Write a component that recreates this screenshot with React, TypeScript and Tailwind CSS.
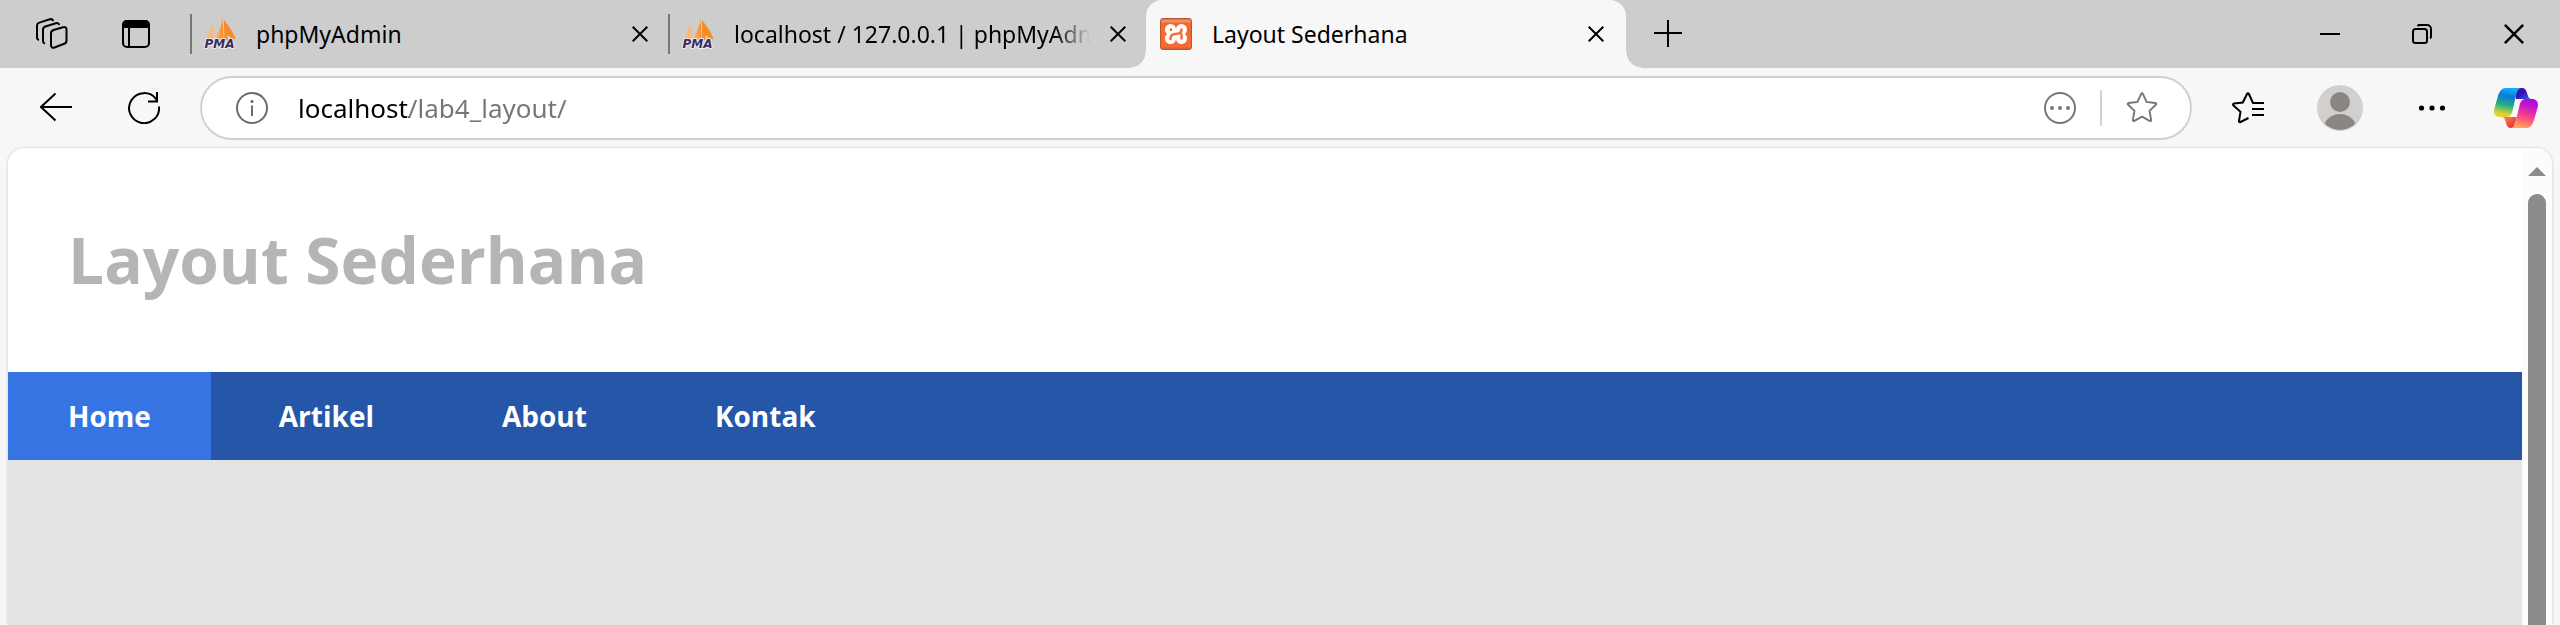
import React from "react";

type IconProps = { className?: string };

function WorkspacesIcon() {
  return (
    <svg className="h-9 w-9" viewBox="0 0 36 36" fill="none" stroke="#000" strokeWidth="2" strokeLinecap="round" strokeLinejoin="round">
      <path d="M19.500 14 29 11.200c2-.6 3.500.4 3.500 2.200v11.300c0 1.600-.8 2.600-2.300 3.100L20.500 31.500c-2 .6-3.500-.4-3.500-2.200V17.300c0-1.600.8-2.700 2.500-3.300Z" />
      <path d="M25 8.200c-.6-1-1.800-1.400-3.200-1L11.300 10.500C9.800 11 9 12 9 13.600V25c0 1 .4 1.800 1.200 2.200" />
      <path d="M19 4.300c-.6-1-1.800-1.400-3.200-1L5.300 6.600C3.800 7.100 3 8.100 3 9.700V21.500c0 1 .4 1.800 1.200 2.200" />
    </svg>
  );
}

function TabActionsIcon() {
  return (
    <svg className="h-7 w-7" viewBox="0 0 28 28" fill="none" stroke="#000" strokeWidth="2">
      <rect x="1" y="1" width="26" height="26" rx="4" />
      <path d="M0 8V5a5 5 0 0 1 5-5h18a5 5 0 0 1 5 5v3Z" fill="#000" stroke="none" />
      <path d="M7 8v19" />
    </svg>
  );
}

function PmaIcon() {
  return (
    <svg className="h-8 w-8 shrink-0 overflow-visible" viewBox="0 0 32 32">
      <defs>
        <linearGradient id="sail" x1="0" y1="0" x2="1" y2="0">
          <stop offset="0" stopColor="#fbc38a" />
          <stop offset="1" stopColor="#f98b25" />
        </linearGradient>
      </defs>
      <path d="M8 4.500C7 10 4.500 16 2 21.500h7.500C9.800 16 9 10 8 4.500Z" fill="#fbb878" />
      <path d="M18.500.5C17.500 9 13.500 16 10 22h9.500Z" fill="url(#sail)" />
      <path d="M20 2 20.300 22H24l-1-4.500 2.800 1 1.700 3 4-.5C29.500 14.500 24.500 8 20 2Z" fill="#f98b25" />
      <text x="0.500" y="30" fontSize="12" fontWeight="700" fontStyle="italic" fontFamily="DejaVu Sans" fill="#3a2c63" stroke="#f3e9e6" strokeWidth="2" strokeLinejoin="round" paintOrder="stroke">PMA</text>
    </svg>
  );
}

function XamppIcon() {
  return (
    <svg className="h-8 w-8 shrink-0" viewBox="0 0 32 32">
      <defs>
        <linearGradient id="xampp" x1="0" y1="0" x2="0" y2="1">
          <stop offset="0" stopColor="#c9643a" />
          <stop offset="0.080" stopColor="#f29a70" />
          <stop offset="0.160" stopColor="#ee6a32" />
          <stop offset="0.900" stopColor="#f76c30" />
          <stop offset="1" stopColor="#c95f2f" />
        </linearGradient>
      </defs>
      <rect x="0.500" y="0.500" width="31" height="31" rx="2.500" fill="url(#xampp)" stroke="#b9592b" />
      <g fill="#fff">
        <circle cx="10.500" cy="11.500" r="5.500" />
        <circle cx="21.500" cy="11.500" r="5.500" />
        <circle cx="10.500" cy="20.500" r="5.500" />
        <circle cx="21.500" cy="20.500" r="5.500" />
        <path d="M9 12h14v8H9Z" />
      </g>
      <g fill="none" stroke="#f4692f" strokeWidth="2.400" strokeLinecap="round">
        <path d="M11 11.500v.5M10.500 21c0-3 1-4.500 3.500-4.800l4-.6c2.500-.4 3.500-1.600 3.500-4.100M21.500 20.500v-4" />
      </g>
    </svg>
  );
}

function CloseIcon({ className = "h-4 w-4" }: IconProps) {
  return (
    <svg className={className} viewBox="0 0 16 16" fill="none" stroke="#000" strokeWidth="2">
      <path d="m.7.7 14.600 14.600M15.300.7.7 15.300" />
    </svg>
  );
}

function CopilotIcon() {
  return (
    <svg className="h-10 w-11" viewBox="0 0 44 40">
      <defs>
        <linearGradient id="cpA" x1="0.600" y1="0" x2="0.400" y2="1">
          <stop offset="0" stopColor="#12b2f5" />
          <stop offset="0.300" stopColor="#0a78dc" />
          <stop offset="0.600" stopColor="#25ad80" />
          <stop offset="0.900" stopColor="#d3d43a" />
          <stop offset="1" stopColor="#f3c928" />
        </linearGradient>
        <linearGradient id="cpB" x1="0.700" y1="0" x2="0.400" y2="1">
          <stop offset="0" stopColor="#ae05e8" />
          <stop offset="0.250" stopColor="#c816c8" />
          <stop offset="0.600" stopColor="#fb4388" />
          <stop offset="1" stopColor="#ffa957" />
        </linearGradient>
        <linearGradient id="cpC" x1="0" y1="0" x2="1" y2="1">
          <stop offset="0" stopColor="#2a10a8" />
          <stop offset="0.500" stopColor="#3a12bd" />
          <stop offset="1" stopColor="#2a72e4" />
        </linearGradient>
        <linearGradient id="cpD" x1="0" y1="0" x2="1" y2="1">
          <stop offset="0" stopColor="#ff8a45" />
          <stop offset="1" stopColor="#e0203c" />
        </linearGradient>
      </defs>
      <path d="M20 0h8c3 0 4.200 2 5 5l1 3c.7 2 1.500 3 4 3H22Z" fill="url(#cpC)" />
      <path d="M9 29h14l-3 9c-.6 1.400-1.500 2-3 2-3 0-4.200-2-5-5l-1-3c-.5-1.800-1-2.600-3-3Z" fill="url(#cpD)" />
      <path d="M12 0h16c-3 0-4.500 2-5.400 5l-4.200 18c-1.200 4-2.700 6-6.400 6H6c-5 0-7-4-5.500-9L4 8c1.600-5 3.500-8 8-8Z" fill="url(#cpA)" />
      <path d="M32 40H16c3 0 4.500-2 5.400-5l4.200-18c1.200-4 2.700-6 6.400-6h6c5 0 7 4 5.500 9L40 32c-1.600 5-3.500 8-8 8Z" fill="url(#cpB)" />
    </svg>
  );
}

const STAR =
  "M16 2.200c.5-1.100 1.500-1.100 2 0l3.900 8.300 9.200 1.200c1.200.2 1.500 1.100.6 1.900l-6.700 6.300 1.700 9.700c.2 1.200-.5 1.700-1.600 1.100L17 26.200l-8.100 4.500c-1 .6-1.800.1-1.600-1.100l1.700-9.700-6.700-6.300c-.9-.8-.6-1.700.6-1.900l9.200-1.200Z";

type TabProps = { title: string; icon: React.ReactNode; className: string; faded?: boolean };

function Tab({ title, icon, className, faded = false }: TabProps) {
  return (
    <div className={"flex items-center " + className}>
      {icon}
      <span
        className={
          "ml-5 min-w-0 flex-1 overflow-hidden whitespace-nowrap text-[23px] leading-8 " +
          (faded ? "[mask-image:linear-gradient(to_right,#000_90%,transparent)]" : "")
        }
      >
        {title}
      </span>
      <button type="button" aria-label={"Close " + title} className="ml-5 shrink-0">
        <CloseIcon />
      </button>
    </div>
  );
}

function TabStrip() {
  return (
    <div className="flex h-[68px] items-center bg-[#cdcdcd]">
      <button type="button" aria-label="Workspaces" className="ml-[34px]"><WorkspacesIcon /></button>
      <button type="button" aria-label="Tab actions" className="ml-[52px]"><TabActionsIcon /></button>
      <div className="ml-10 h-10 w-[2px] bg-[#767676]" />
      <Tab title="phpMyAdmin" icon={<PmaIcon />} className="ml-3 w-[444px]" />
      <div className="ml-5 h-10 w-[2px] bg-[#767676]" />
      <Tab title="localhost / 127.0.0.1 | phpMyAdmin" icon={<PmaIcon />} className="ml-3 w-[444px]" faded />
      <div className="ml-1 flex h-full items-end">
        <div className="h-4 w-4 bg-[radial-gradient(circle_at_0_0,#cdcdcd_15px,#f7f7f7_16px)]" />
        <Tab title="Layout Sederhana" icon={<XamppIcon />} className="h-full w-[480px] rounded-t-2xl bg-[#f7f7f7] pl-[14px] pr-[22px]" />
        <div className="h-4 w-4 bg-[radial-gradient(circle_at_100%_0,#cdcdcd_15px,#f7f7f7_16px)]" />
      </div>
      <button type="button" aria-label="New tab" className="ml-3">
        <svg className="h-7 w-7" viewBox="0 0 28 28" stroke="#000" strokeWidth="2"><path d="M0 13h28M14 0v27" /></svg>
      </button>
      <div className="ml-auto mr-9 flex items-center gap-[72px]">
        <button type="button" aria-label="Minimize">
          <svg className="h-5 w-5" viewBox="0 0 20 20" stroke="#000" strokeWidth="2"><path d="M0 10h20" /></svg>
        </button>
        <button type="button" aria-label="Restore">
          <svg className="h-5 w-5" viewBox="0 0 20 20" fill="none" stroke="#000" strokeWidth="2">
            <rect x="1" y="5" width="14" height="14" rx="2.500" />
            <path d="M5.500 2c.6-.7 1.200-1 2-1H15a4 4 0 0 1 4 4v7.500c0 .8-.3 1.500-1 2" />
          </svg>
        </button>
        <button type="button" aria-label="Close window"><CloseIcon className="h-5 w-5" /></button>
      </div>
    </div>
  );
}

function Toolbar() {
  return (
    <div className="flex h-20 items-center">
      <button type="button" aria-label="Back" className="ml-10">
        <svg className="h-8 w-8" viewBox="0 0 32 32" fill="none" stroke="#000" strokeWidth="2"><path d="M32 15H1M15.500 1.500 1 15l14.500 13.500" /></svg>
      </button>
      <button type="button" aria-label="Refresh" className="ml-14">
        <svg className="h-8 w-8" viewBox="0 0 32 32" fill="none" stroke="#000" strokeWidth="2">
          <path d="M31 14.500A15 15 0 1 1 28 7l1 2.500" /><path d="M29 0v9.500h-9" />
        </svg>
      </button>
      <form className="ml-10 flex h-16 flex-1 items-center rounded-full border-2 border-[#d1d1d1] bg-white pl-[34px] pr-8">
        <svg className="h-8 w-8 shrink-0" viewBox="0 0 32 32" fill="none" stroke="#6b6b6b" strokeWidth="2">
          <circle cx="16" cy="16" r="15" /><path d="M16 13.500V24" /><circle cx="16" cy="9.500" r="1.600" fill="#6b6b6b" stroke="none" />
        </svg>
        <input
          type="text"
          aria-label="Address"
          defaultValue="localhost/lab4_layout/"
          className="ml-[30px] min-w-0 flex-1 bg-[linear-gradient(to_right,#000_111px,#767676_111px)] bg-clip-text text-[26px] leading-9 text-transparent caret-black outline-none"
        />
        <button type="button" aria-label="Site options">
          <svg className="h-8 w-8" viewBox="0 0 32 32" fill="none" stroke="#767676" strokeWidth="2">
            <circle cx="16" cy="16" r="15" />
            <g fill="#767676" stroke="none"><circle cx="8" cy="16" r="2" /><circle cx="16" cy="16" r="2" /><circle cx="24" cy="16" r="2" /></g>
          </svg>
        </button>
        <div className="ml-6 h-9 w-[2px] bg-[#d1d1d1]" />
        <button type="button" aria-label="Add to favorites" className="ml-6">
          <svg className="h-8 w-8" viewBox="0 0 34 34" fill="none" stroke="#767676" strokeWidth="2"><path d={STAR} /></svg>
        </button>
      </form>
      <button type="button" aria-label="Favorites" className="ml-10">
        <svg className="h-8 w-8" viewBox="0 0 32 32" fill="none" stroke="#000" strokeWidth="2">
          <path d="M16.500 26 8.500 30c-1 .5-1.700 0-1.500-1.200l1.500-9L1.500 13.500c-.8-.8-.5-1.700.6-1.900l8.700-1.100 4.200-8.500c.5-1 1.400-1 1.900 0L21 11h11M20 17h12M20 23h12" />
        </svg>
      </button>
      <button type="button" aria-label="Profile" className="ml-[53px]">
        <svg className="h-[46px] w-[46px]" viewBox="0 0 46 46">
          <clipPath id="avatar"><circle cx="23" cy="23" r="22" /></clipPath>
          <circle cx="23" cy="23" r="23" fill="#d2d0ce" />
          <g clipPath="url(#avatar)" fill="#8a8683"><circle cx="23" cy="17" r="10" /><ellipse cx="23" cy="45" rx="17" ry="16" /></g>
        </svg>
      </button>
      <button type="button" aria-label="Settings and more" className="ml-[55px]">
        <svg className="h-6 w-7" viewBox="0 0 28 24"><circle cx="3.500" cy="12" r="2.600" /><circle cx="14" cy="12" r="2.600" /><circle cx="24.500" cy="12" r="2.600" /></svg>
      </button>
      <button type="button" aria-label="Copilot" className="ml-12 mr-[22px]"><CopilotIcon /></button>
    </div>
  );
}

export default function App() {
  const links = ["Home", "Artikel", "About", "Kontak"];
  return (
    <div className="flex h-screen flex-col overflow-hidden bg-[#f7f7f7] font-['Noto_Sans','Open_Sans',sans-serif] text-black">
      <TabStrip />
      <Toolbar />
      <div className="mx-2 flex flex-1 overflow-hidden rounded-t-2xl bg-white shadow-[0_0_2px_1px_#dedede]">
        <main className="flex flex-1 flex-col font-['Open_Sans',sans-serif]">
          <header className="px-[60px] py-[68px]">
            <h1 className="text-[64px] font-bold leading-[88px] text-[#b5b5b5]">Layout Sederhana</h1>
          </header>
          <nav className="flex gap-2 bg-[#2556a7]">
            {links.map((l, i) => (
              <a key={l} href="#" className={"px-[60px] py-6 text-[28px] font-bold leading-10 text-white " + (i === 0 ? "bg-[#3674e4]" : "")}>
                {l}
              </a>
            ))}
          </nav>
          <div className="flex-1 bg-[#e4e4e4]" />
        </main>
        <div className="flex w-[30px] flex-col items-center bg-[#fcfcfc] pt-[19px]">
          <svg className="h-[9px] w-[18px]" viewBox="0 0 18 9"><path d="M9 0 18 9H0Z" fill="#8b8b8b" /></svg>
          <div className="mt-[18px] w-[18px] flex-1 rounded-t-full bg-[#8b8b8b]" />
        </div>
      </div>
    </div>
  );
}
